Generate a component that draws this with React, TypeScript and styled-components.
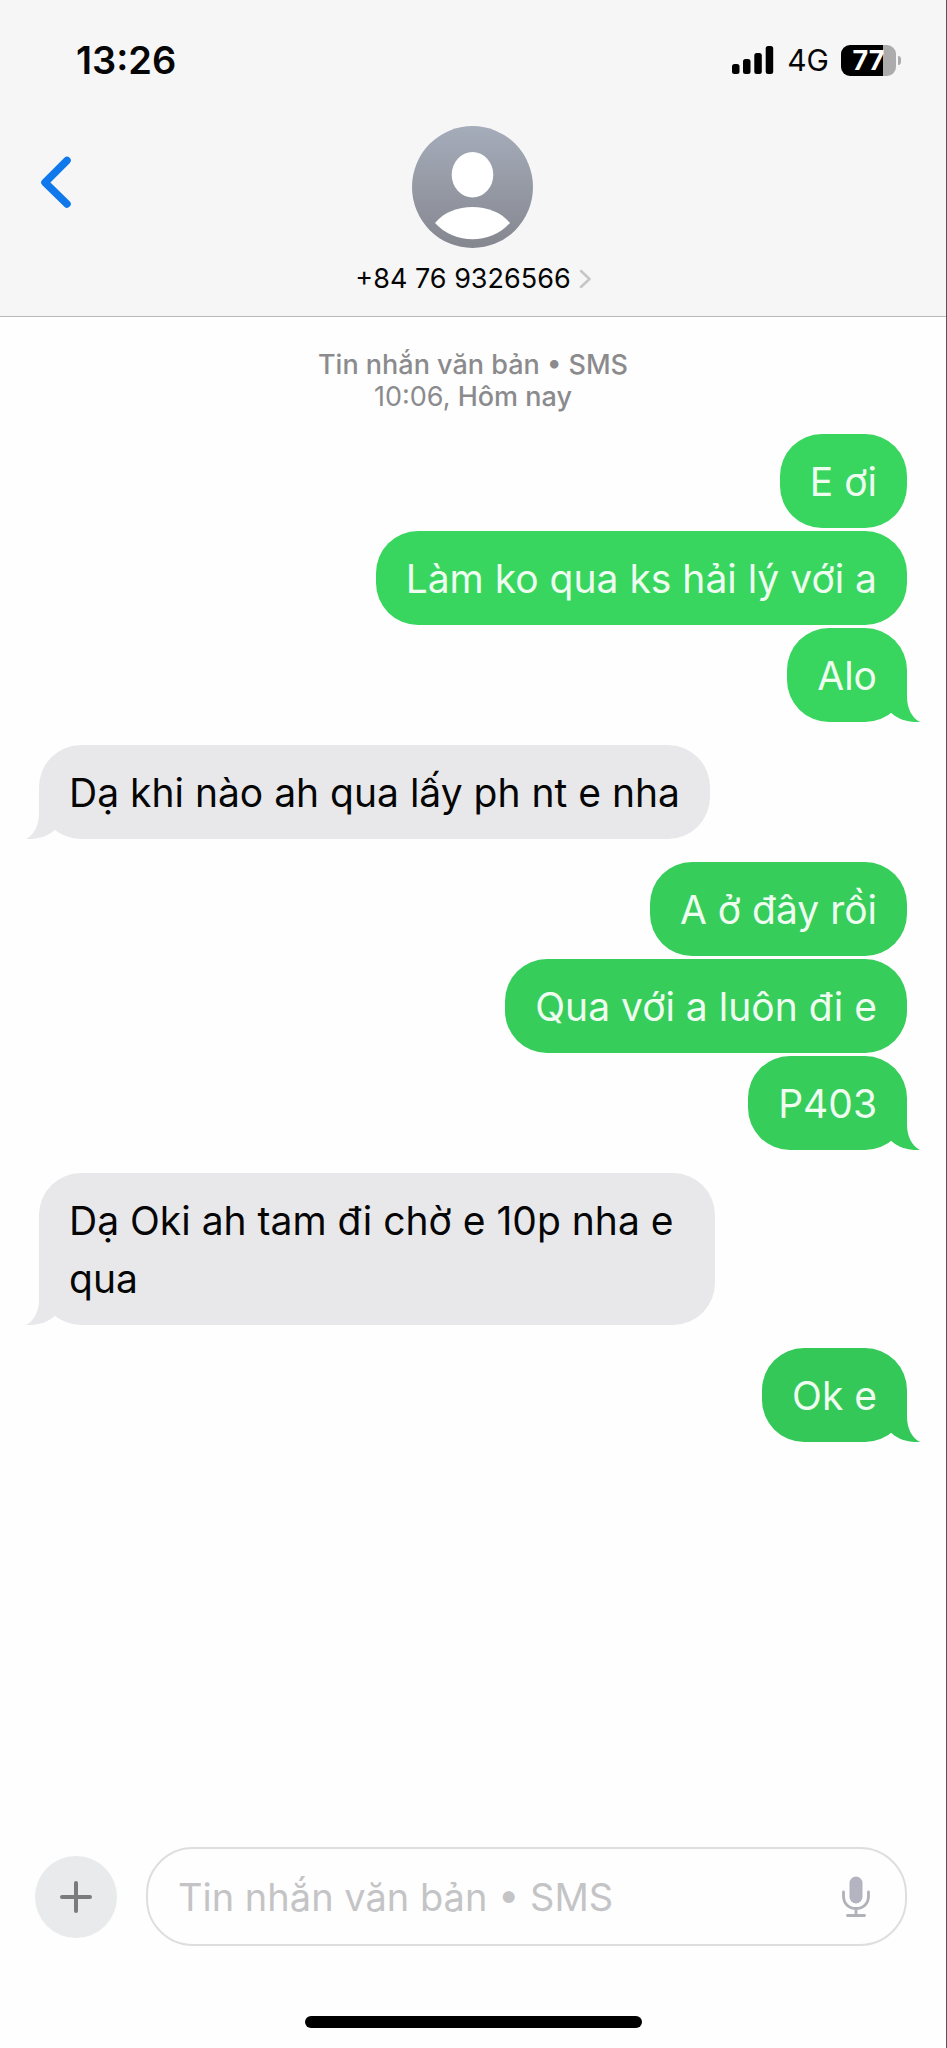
import React from 'react';
import styled, { createGlobalStyle } from 'styled-components';

const GlobalStyle = createGlobalStyle`
  *, *::before, *::after { box-sizing: border-box; }
  body {
    margin: 0;
    background: #fefefe;
    font-family: Inter, "Liberation Sans", sans-serif;
    color: #060606;
  }
  button, input { font: inherit; color: inherit; }
`;

const Screen = styled.div`
  display: flex;
  flex-direction: column;
  min-height: 100vh;
  border-right: 1px solid #55555a;
`;

const Header = styled.header`
  background: #f6f6f6;
  border-bottom: 1px solid #b9b9bc;
  padding-bottom: 20px;
`;

const StatusBar = styled.div`
  display: flex;
  justify-content: space-between;
  align-items: center;
  padding: 38px 45px 0 76px;
`;

const Clock = styled.time`
  font-size: 38px;
  line-height: 44px;
  font-weight: 600;
`;

const StatusIcons = styled.div`
  display: flex;
  align-items: center;
`;

const Network = styled.span`
  margin: 0 12px 0 13px;
  font-size: 30px;
  line-height: 44px;
`;

const Battery = styled.div`
  display: flex;
  align-items: center;
  gap: 2px;
`;

const BatteryBody = styled.div<{ $level: number }>`
  width: 55px;
  height: 31px;
  border-radius: 9px;
  background: linear-gradient(to right, #000 ${p => p.$level}%, #acacac ${p => p.$level}%);
  color: #fff;
  font-size: 27px;
  line-height: 31px;
  font-weight: 700;
  text-align: center;
`;

const BatteryTip = styled.div`
  width: 3px;
  height: 9px;
  border-radius: 0 4px 4px 0;
  background: #acacac;
`;

const NavBar = styled.div`
  display: grid;
  grid-template-columns: 1fr auto 1fr;
  align-items: start;
  padding: 44px 32px 0;
`;

const BackButton = styled.button`
  justify-self: start;
  margin-top: 30px;
  padding: 0 8px;
  border: 0;
  background: none;
  svg { display: block; }
`;

const Contact = styled.button`
  display: flex;
  flex-direction: column;
  align-items: center;
  gap: 14px;
  padding: 0;
  border: 0;
  background: none;
  svg { display: block; }
`;

const ContactName = styled.span`
  display: flex;
  align-items: center;
  gap: 8px;
  font-size: 27px;
  line-height: 34px;
`;

const Thread = styled.main`
  flex: 1;
  display: flex;
  flex-direction: column;
  gap: 23px;
  padding: 32px 39px;
`;

const Stamp = styled.p`
  margin: 0 0 -2px;
  text-align: center;
  font-size: 27px;
  line-height: 32px;
  font-weight: 500;
  color: #8b8b8e;
  time { font-weight: 400; }
`;

const Group = styled.ul<{ $sent: boolean }>`
  display: flex;
  flex-direction: column;
  align-items: ${p => (p.$sent ? 'flex-end' : 'flex-start')};
  gap: 3px;
  margin: 0;
  padding: 0;
  list-style: none;
`;

const Bubble = styled.li<{ $sent: boolean; $tone: string }>`
  position: relative;
  max-width: 676px;
  padding: 19px 30px 17px;
  border-radius: 42px;
  background: ${p => p.$tone};
  color: ${p => (p.$sent ? '#eefdf0' : '#060606')};
  font-size: 39px;
  line-height: 58px;
`;

const Tail = styled.svg<{ $sent: boolean }>`
  position: absolute;
  bottom: 0;
  ${p => (p.$sent ? 'right: -13px;' : 'left: -13px; transform: scaleX(-1);')}
`;

const Composer = styled.form`
  display: flex;
  align-items: center;
  gap: 29px;
  padding: 0 39px 0 35px;
`;

const AddButton = styled.button`
  display: grid;
  place-items: center;
  width: 82px;
  height: 82px;
  padding: 0;
  border: 0;
  border-radius: 50%;
  background: #e9eaeb;
`;

const Field = styled.div`
  flex: 1;
  display: flex;
  align-items: center;
  height: 99px;
  padding: 0 35px 0 30px;
  border: 2px solid #dededf;
  border-radius: 47px;
`;

const MessageInput = styled.input`
  flex: 1;
  min-width: 0;
  padding: 0;
  border: 0;
  outline: 0;
  background: none;
  font-size: 38px;
  line-height: 58px;
  &::placeholder { color: #c4c4c6; opacity: 1; }
`;

const MicButton = styled.button`
  padding: 0;
  border: 0;
  background: none;
  svg { display: block; }
`;

const HomeIndicator = styled.div`
  width: 337px;
  height: 12px;
  margin: 70px auto 20px;
  border-radius: 6px;
  background: #000;
`;

interface MessageGroup {
  sent: boolean;
  tone: string;
  messages: string[];
}

const groups: MessageGroup[] = [
  { sent: true, tone: '#38d65f', messages: ['E ơi', 'Làm ko qua ks hải lý với a', 'Alo'] },
  { sent: false, tone: '#e8e8ea', messages: ['Dạ khi nào ah qua lấy ph nt e nha'] },
  { sent: true, tone: '#36cd5b', messages: ['A ở đây rồi', 'Qua với a luôn đi e', 'P403'] },
  { sent: false, tone: '#e8e8ea', messages: ['Dạ Oki ah tam đi chờ e 10p nha e qua'] },
  { sent: true, tone: '#34c859', messages: ['Ok e'] },
];

const SignalIcon = () => (
  <svg width="42" height="30" viewBox="0 0 42 30" aria-hidden="true">
    <rect x="0" y="19" width="7.5" height="10" rx="2.5" />
    <rect x="11" y="14" width="7.5" height="15" rx="2.5" />
    <rect x="22.3" y="8" width="7.5" height="21" rx="2.5" />
    <rect x="33.7" y="1" width="7.5" height="28" rx="2.5" />
  </svg>
);

const AvatarIcon = () => (
  <svg width="121" height="122" viewBox="0 0 121 122" aria-hidden="true">
    <defs>
      <linearGradient id="avatar" x1="0" y1="0" x2="0" y2="1">
        <stop offset="0" stopColor="#a5acba" />
        <stop offset="1" stopColor="#85878f" />
      </linearGradient>
    </defs>
    <ellipse cx="60.5" cy="61" rx="60.5" ry="61" fill="url(#avatar)" />
    <ellipse cx="60.5" cy="48.7" rx="20.8" ry="22.7" fill="#fff" />
    <path d="M23 97 C32 86 46 81 60.5 81 S89 86 98 97 C88 108 74 113.3 60.5 113.3 S33 108 23 97 Z" fill="#fff" />
  </svg>
);

export default function App() {
  return (
    <>
      <GlobalStyle />
      <Screen>
        <Header>
          <StatusBar>
            <Clock>13:26</Clock>
            <StatusIcons>
              <SignalIcon />
              <Network>4G</Network>
              <Battery>
                <BatteryBody $level={77}>77</BatteryBody>
                <BatteryTip />
              </Battery>
            </StatusIcons>
          </StatusBar>
          <NavBar>
            <BackButton type="button" aria-label="Back">
              <svg width="32" height="52" viewBox="0 0 32 52" fill="none" stroke="#0f78ea" strokeWidth="7.5" strokeLinecap="round" strokeLinejoin="round">
                <path d="M27 4.5 L5 26.500 L27 48" />
              </svg>
            </BackButton>
            <Contact type="button">
              <AvatarIcon />
              <ContactName>
                +84 76 9326566
                <svg width="12" height="20" viewBox="0 0 12 20" fill="none" stroke="#c6c6c9" strokeWidth="2.5" strokeLinecap="round" strokeLinejoin="round" aria-hidden="true">
                  <path d="M2 2 L10.5 10 L2 18" />
                </svg>
              </ContactName>
            </Contact>
          </NavBar>
        </Header>

        <Thread>
          <Stamp>
            Tin nhắn văn bản • SMS
            <br />
            <time>10:06,</time> Hôm nay
          </Stamp>
          {groups.map((group, g) => (
            <Group key={g} $sent={group.sent}>
              {group.messages.map((text, i) => (
                <Bubble key={text} $sent={group.sent} $tone={group.tone}>
                  {text}
                  {i === group.messages.length - 1 && (
                    <Tail $sent={group.sent} width="32" height="47" viewBox="0 0 32 47" fill={group.tone} aria-hidden="true">
                      <path d="M0 0 H19 V22 C19 33 24 43 32 47 C22 47.5 11 45 4 38.5 L0 36 Z" />
                    </Tail>
                  )}
                </Bubble>
              ))}
            </Group>
          ))}
        </Thread>

        <Composer onSubmit={e => e.preventDefault()}>
          <AddButton type="button" aria-label="Add">
            <svg width="32" height="32" viewBox="0 0 32 32" stroke="#7b7b7e" strokeWidth="4" strokeLinecap="round">
              <path d="M16 2 V30 M2 16 H30" />
            </svg>
          </AddButton>
          <Field>
            <MessageInput type="text" aria-label="Message" placeholder="Tin nhắn văn bản • SMS" />
            <MicButton type="button" aria-label="Dictate">
              <svg width="28" height="42" viewBox="0 0 28 42" fill="none" stroke="#b0b1b9" strokeWidth="2.8" strokeLinecap="round">
                <rect x="7.5" y="0.5" width="13" height="27" rx="6.5" fill="#b3b4c0" stroke="none" />
                <path d="M1.5 16 V20 C1.5 28 7 32.5 14 32.5 S26.5 28 26.5 20 V16 M14 33 V39 M5.5 39.5 H22.5" />
              </svg>
            </MicButton>
          </Field>
        </Composer>
        <HomeIndicator />
      </Screen>
    </>
  );
}
